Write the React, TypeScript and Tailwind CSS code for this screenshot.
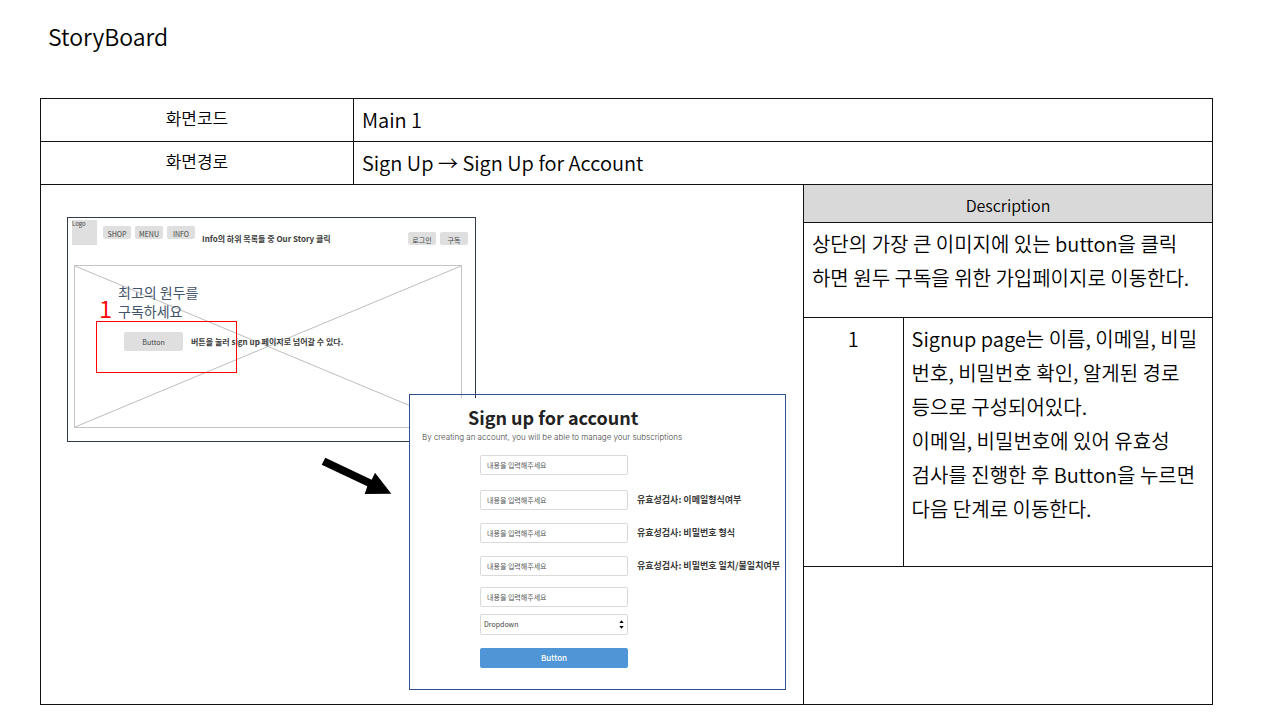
import React from "react";

const cell = "border border-[#111]";

function NavButton({ children }: { children: React.ReactNode }) {
  return (
    <button
      type="button"
      className="flex h-[13px] w-7 items-end justify-center rounded-[2px] bg-[#dfdfdf] text-[7px] leading-[10px] text-[#444]"
    >
      {children}
    </button>
  );
}

function MainMockup() {
  return (
    <section className="absolute left-[26px] top-8 h-[225px] w-[409px] border border-[#333b4a]">
      <header className="flex pl-1 pr-[7px] pt-0.5">
        <div className="h-[25px] w-[25px] bg-[#dfdfdf] text-[6px] leading-[8px] text-[#444]">Logo</div>
        <nav className="ml-1.5 flex gap-1 pt-1.5">
          <NavButton>SHOP</NavButton>
          <NavButton>MENU</NavButton>
          <NavButton>INFO</NavButton>
        </nav>
        <p className="ml-[7px] pt-3.5 text-[8px] font-bold leading-[10px] text-[#3a3a3a]">
          Info의 하위 목록들 중 Our Story 클릭
        </p>
        <div className="ml-auto flex gap-1 pt-3">
          <NavButton>로그인</NavButton>
          <NavButton>구독</NavButton>
        </div>
      </header>
      <div className="relative ml-1.5 mr-[13px] mt-5 h-[163px] border border-[#c4c4c4]">
        <svg className="absolute inset-0 h-full w-full" viewBox="0 0 386 161" preserveAspectRatio="none" aria-hidden="true">
          <path d="M0 0L386 161M0 161L386 0" stroke="#bdbdbd" strokeWidth="1" fill="none" />
        </svg>
        <div className="relative pl-[43px] pt-[17px]">
          <h2 className="text-[14px] leading-[19px] text-[#44546a]">
            최고의 원두를
            <br />
            구독하세요
          </h2>
          <div className="ml-1.5 mt-[11px] flex items-center gap-2">
            <button type="button" className="h-[19px] w-[59px] rounded-[2px] bg-[#dfdfdf] text-[7px] leading-[10px] text-[#444]">
              Button
            </button>
            <p className="text-[8px] font-bold leading-[10px] text-[#3a3a3a]">
              버튼을 눌러 sign up 페이지로 넘어갈 수 있다.
            </p>
          </div>
        </div>
        <span className="absolute left-6 top-7 text-[24px] font-[350] leading-7 text-[#ff0000]">1</span>
        <div className="absolute left-[21px] top-[55px] h-[52px] w-[141px] border border-[#ff0000]" />
      </div>
    </section>
  );
}

function Field({ label, note, gap }: { label: string; note?: string; gap: string }) {
  return (
    <div className={`flex items-center gap-[9px] ${gap}`}>
      <input
        type="text"
        aria-label={label}
        placeholder="내용을 입력해주세요"
        className="h-5 w-[148px] shrink-0 rounded-[2px] border border-[#dadada] bg-white px-1.5 text-[7px] text-[#444] outline-none placeholder:text-[#555]"
      />
      {note && <span className="whitespace-nowrap text-[9px] font-bold leading-[12px] text-[#3a3a3a]">{note}</span>}
    </div>
  );
}

function SignupMockup() {
  return (
    <section className="absolute left-[368px] top-[209px] h-[296px] w-[377px] border border-[#2f528f] pt-[3px]">
      <form className="h-full bg-white" onSubmit={(e) => e.preventDefault()}>
        <h2 className="pl-[58px] pt-[7px] text-[18px] font-bold leading-6 text-[#222]">Sign up for account</h2>
        <p className="whitespace-nowrap pl-3 pt-0.5 font-['Inter',sans-serif] text-[8px] font-light leading-3 text-[#444]">
          By creating an account, you will be able to manage your subscriptions
        </p>
        <div className="flex flex-col pl-[70px]">
          <Field label="이름" gap="mt-3" />
          <Field label="이메일" note="유효성검사: 이메일형식여부" gap="mt-[15px]" />
          <Field label="비밀번호" note="유효성검사: 비밀번호 형식" gap="mt-[13px]" />
          <Field label="비밀번호 확인" note="유효성검사: 비밀번호 일치/불일치여부" gap="mt-[13px]" />
          <Field label="알게된 경로" gap="mt-[11px]" />
          <div className="relative mt-[7px] w-[148px]">
            <select
              aria-label="Dropdown"
              className="block h-[21px] w-full appearance-none rounded-[2px] border border-[#dadada] bg-white px-[3px] text-[7px] text-[#444]"
            >
              <option>Dropdown</option>
            </select>
            <svg className="pointer-events-none absolute right-1 top-1.5 h-[9px] w-[5px]" viewBox="0 0 5 9" aria-hidden="true">
              <path d="M0.3 3L2.5 0.3L4.7 3ZM0.3 6L2.5 8.7L4.7 6Z" fill="#000" />
            </svg>
          </div>
          <button type="submit" className="mt-[13px] h-5 w-[148px] rounded-[2px] bg-[#5095d5] text-[8px] font-medium text-white">
            Button
          </button>
        </div>
      </form>
    </section>
  );
}

export default function App() {
  return (
    <main className="min-h-screen bg-white pb-3 pl-10 pr-[67px] pt-5 font-['Noto_Sans_CJK_KR','Noto_Sans',sans-serif] text-black">
      <h1 className="pl-2 text-[23px] font-[350] leading-8">StoryBoard</h1>
      <table className="mt-[46px] w-full table-fixed border-collapse">
        <colgroup>
          <col className="w-[26.7%]" />
          <col className="w-[38.4%]" />
          <col className="w-[8.5%]" />
          <col className="w-[26.4%]" />
        </colgroup>
        <tbody>
          <tr className="h-[43px]">
            <th scope="row" className={`${cell} pb-1 text-[17px] font-[350] leading-6`}>화면코드</th>
            <td colSpan={3} className={`${cell} pl-2 text-[20px] font-[350] leading-6`}>Main 1</td>
          </tr>
          <tr className="h-[43px]">
            <th scope="row" className={`${cell} pb-1 text-[17px] font-[350] leading-6`}>화면경로</th>
            <td colSpan={3} className={`${cell} pl-2 text-[20px] font-[350] leading-6`}>
              Sign Up → Sign Up for Account
            </td>
          </tr>
          <tr className="h-[38px]">
            <td colSpan={2} rowSpan={4} className={`${cell} p-0 align-top`}>
              <div className="relative h-[518px]">
                <MainMockup />
                <svg className="absolute left-[280px] top-[271px] h-[40px] w-[72px]" viewBox="0 0 72 40" aria-hidden="true">
                  <path d="M4.3 1.7L50.7 23.7L54 16.7L70.3 37.7L43.7 38L46.3 30.3L0.7 8.7Z" fill="#000" />
                </svg>
                <SignupMockup />
              </div>
            </td>
            <th colSpan={2} scope="col" className={`${cell} bg-[#d9d9d9] pt-0.5 text-[16px] font-[350] leading-6`}>
              Description
            </th>
          </tr>
          <tr className="h-[95px]">
            <td colSpan={2} className={`${cell} whitespace-nowrap pl-2 pt-1 align-top text-[20px] font-[350] leading-[34px]`}>
              상단의 가장 큰 이미지에 있는 button을 클릭
              <br />
              하면 원두 구독을 위한 가입페이지로 이동한다.
            </td>
          </tr>
          <tr className="h-[249px]">
            <td className={`${cell} pt-1 text-center align-top text-[20px] font-[350] leading-[34px]`}>1</td>
            <td className={`${cell} whitespace-nowrap pl-2 pt-1 align-top text-[20px] font-[350] leading-[34px]`}>
              Signup page는 이름, 이메일, 비밀
              <br />
              번호, 비밀번호 확인, 알게된 경로
              <br />
              등으로 구성되어있다.
              <br />
              이메일, 비밀번호에 있어 유효성
              <br />
              검사를 진행한 후 Button을 누르면
              <br />
              다음 단계로 이동한다.
            </td>
          </tr>
          <tr className="h-[138px]">
            <td colSpan={2} className={cell} />
          </tr>
        </tbody>
      </table>
    </main>
  );
}
